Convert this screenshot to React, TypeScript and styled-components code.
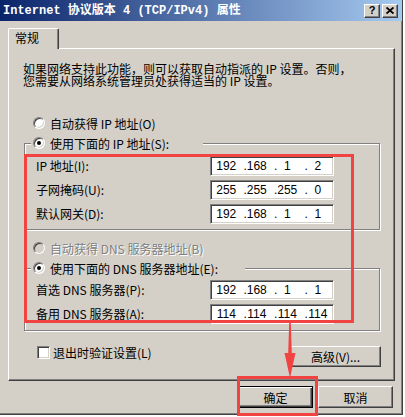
import React from 'react';
import styled, { createGlobalStyle } from 'styled-components';

const FACE = '#d4d0c8';
const RED = '#f24343';

const GlobalStyle = createGlobalStyle`
  html, body {
    margin: 0;
    padding: 0;
    background: #ffffff;
  }
  body {
    font-family: "Noto Sans CJK SC", "Noto Sans", sans-serif;
    font-size: 12px;
    color: #000;
  }
  * {
    box-sizing: border-box;
  }
`;

const Screen = styled.div`
  position: relative;
  width: 405px;
  height: 417px;
  overflow: hidden;
`;

const Window = styled.div`
  width: 403px;
  height: 415px;
  background: ${FACE};
  border-right: 1px solid #404040;
  border-bottom: 1px solid #404040;
  box-shadow: inset -1px -1px 0 #808080;
  display: flex;
  flex-direction: column;
`;

const TitleBar = styled.div`
  height: 21px;
  flex: none;
  display: flex;
  align-items: center;
  justify-content: space-between;
  padding: 0 4px 0 3px;
  background: linear-gradient(to right, #0a246a, #a6caf0);
`;

const Title = styled.span`
  font-family: "Liberation Mono", "Noto Sans CJK SC", monospace;
  font-weight: bold;
  font-size: 12px;
  line-height: 14px;
  color: #fff;
  white-space: nowrap;
`;

const CaptionButtons = styled.div`
  display: flex;
  gap: 2px;
`;

const CaptionButton = styled.div`
  width: 16px;
  height: 14px;
  background: ${FACE};
  border: 1px solid;
  border-color: #fff #404040 #404040 #fff;
  box-shadow: inset -1px -1px 0 #808080;
  display: flex;
  align-items: center;
  justify-content: center;
  font-family: "Liberation Sans", sans-serif;
  font-weight: bold;
  font-size: 11px;
  line-height: 1;
`;

const Body = styled.div`
  flex: 1;
  padding: 7px 0 0 8px;
  display: flex;
  flex-direction: column;
`;

const TabStrip = styled.div`
  display: flex;
  height: 20px;
  position: relative;
  z-index: 1;
`;

const Tab = styled.div`
  width: 51px;
  height: 21px;
  background: ${FACE};
  border-top: 1px solid #fff;
  border-left: 1px solid #fff;
  border-right: 1px solid #404040;
  box-shadow: inset -1px 0 0 #808080;
  border-top-left-radius: 2px;
  border-top-right-radius: 2px;
  padding-left: 6px;
  line-height: 18px;
`;

const Panel = styled.div`
  width: 387px;
  height: 333px;
  border: 1px solid;
  border-color: #fff #404040 #404040 #fff;
  box-shadow: inset -1px -1px 0 #808080;
  display: flex;
  flex-direction: column;
`;

const Description = styled.p`
  margin: 14px 0 0 14px;
  line-height: 12px;
  white-space: nowrap;
`;

const OptionRow = styled.div<{ $top: number; $disabled?: boolean }>`
  display: flex;
  align-items: center;
  gap: 5px;
  height: 16px;
  margin: ${(p) => p.$top}px 0 0 24px;
  white-space: nowrap;
  color: ${(p) => (p.$disabled ? '#808080' : '#000')};
  text-shadow: ${(p) => (p.$disabled ? '1px 1px 0 #fff' : 'none')};
`;

const Radio = styled.span<{ $checked?: boolean; $disabled?: boolean }>`
  position: relative;
  flex: none;
  width: 12px;
  height: 12px;
  border-radius: 50%;
  border: 1px solid;
  border-color: #808080 #fff #fff #808080;
  background: ${(p) => (p.$disabled ? FACE : '#fff')};
  box-shadow: inset 1px 1px 0 #404040, inset -1px -1px 0 ${FACE};
  &::after {
    content: '';
    display: ${(p) => (p.$checked ? 'block' : 'none')};
    position: absolute;
    left: 3px;
    top: 3px;
    width: 4px;
    height: 4px;
    border-radius: 50%;
    background: #000;
  }
`;

const GroupBox = styled.div<{ $top: number; $padTop: number; $padBottom: number }>`
  position: relative;
  margin: ${(p) => p.$top}px 14px 0 15px;
  padding: ${(p) => p.$padTop}px 0 ${(p) => p.$padBottom}px 11px;
  border: 1px solid #808080;
  box-shadow: inset 1px 1px 0 #fff, 1px 1px 0 #fff;
  display: grid;
  grid-template-columns: 174px 124px;
  row-gap: 4px;
  align-items: center;
`;

const Legend = styled.div<{ $width: number }>`
  position: absolute;
  top: -9px;
  left: 6px;
  width: ${(p) => p.$width}px;
  height: 16px;
  padding-left: 2px;
  background: ${FACE};
  display: flex;
  align-items: center;
  gap: 5px;
  white-space: nowrap;
`;

const FieldLabel = styled.span`
  line-height: 20px;
  white-space: nowrap;
`;

const IpBox = styled.div`
  width: 124px;
  height: 20px;
  background: #fff;
  border: 1px solid;
  border-color: #808080 #fff #fff #808080;
  box-shadow: inset 1px 1px 0 #404040, inset -1px -1px 0 ${FACE};
  display: grid;
  grid-template-columns: repeat(4, 1fr);
  align-items: center;
  font-family: "Liberation Sans", sans-serif;
  font-size: 12px;
  line-height: 18px;
`;

const Octet = styled.span<{ $dot: boolean }>`
  position: relative;
  text-align: center;
  &::before {
    content: '.';
    display: ${(p) => (p.$dot ? 'block' : 'none')};
    position: absolute;
    left: 2px;
    top: 0;
  }
`;

const PanelFooter = styled.div`
  display: flex;
  justify-content: space-between;
  align-items: flex-start;
  margin: 14px 13px 0 28px;
`;

const CheckRow = styled.div`
  display: flex;
  align-items: center;
  gap: 3px;
  height: 14px;
  white-space: nowrap;
`;

const CheckBox = styled.span`
  flex: none;
  width: 13px;
  height: 13px;
  background: #fff;
  border: 1px solid;
  border-color: #808080 #fff #fff #808080;
  box-shadow: inset 1px 1px 0 #404040, inset -1px -1px 0 ${FACE};
`;

const Button = styled.div<{ $width: number; $height: number; $default?: boolean }>`
  width: ${(p) => p.$width}px;
  height: ${(p) => p.$height}px;
  background: ${FACE};
  border: 1px solid;
  border-color: ${(p) => (p.$default ? '#000' : '#fff #404040 #404040 #fff')};
  box-shadow: ${(p) => (p.$default
    ? 'inset 1px 1px 0 #fff, inset -1px -1px 0 #404040, inset -2px -2px 0 #808080'
    : 'inset -1px -1px 0 #808080')};
  display: flex;
  align-items: center;
  justify-content: center;
  white-space: nowrap;
`;

const AdvancedButton = styled(Button)`
  margin-top: 1px;
`;

const DialogButtons = styled.div`
  display: flex;
  justify-content: flex-end;
  gap: 5px;
  width: 387px;
  padding-right: 2px;
  margin-top: 5px;
`;

const Highlight = styled.div<{ $x: number; $y: number; $w: number; $h: number }>`
  position: absolute;
  left: ${(p) => p.$x}px;
  top: ${(p) => p.$y}px;
  width: ${(p) => p.$w}px;
  height: ${(p) => p.$h}px;
  border: 3px solid ${RED};
  pointer-events: none;
`;

const ArrowLayer = styled.svg`
  position: absolute;
  left: 0;
  top: 0;
  pointer-events: none;
`;

type Field = { label: string, value: string };

const ipFields: Field[] = [
  { label: 'IP 地址(I):', value: '192.168.1.2' },
  { label: '子网掩码(U):', value: '255.255.255.0' },
  { label: '默认网关(D):', value: '192.168.1.1' },
];

const dnsFields: Field[] = [
  { label: '首选 DNS 服务器(P):', value: '192.168.1.1' },
  { label: '备用 DNS 服务器(A):', value: '114.114.114.114' },
];

function IpInput({ value }: { value: string }): JSX.Element {
  return (
    <IpBox>
      {value.split('.').map((part, i) => (
        <Octet key={i} $dot={i > 0}>{part}</Octet>
      ))}
    </IpBox>
  );
}

function FieldRows({ fields }: { fields: Field[] }): JSX.Element {
  return (
    <>
      {fields.map((f) => (
        <React.Fragment key={f.label}>
          <FieldLabel>{f.label}</FieldLabel>
          <IpInput value={f.value} />
        </React.Fragment>
      ))}
    </>
  );
}

function App(): JSX.Element {
  return (
    <>
      <GlobalStyle />
      <Screen>
        <Window>
          <TitleBar>
            <Title>Internet 协议版本 4 (TCP/IPv4) 属性</Title>
            <CaptionButtons>
              <CaptionButton>?</CaptionButton>
              <CaptionButton>
                <svg width="8" height="7" viewBox="0 0 8 7">
                  <path d="M0.5 0.5 L7.5 6.5 M7.5 0.5 L0.5 6.5" stroke="#000" strokeWidth="1.8" />
                </svg>
              </CaptionButton>
            </CaptionButtons>
          </TitleBar>
          <Body>
            <TabStrip>
              <Tab>常规</Tab>
            </TabStrip>
            <Panel>
              <Description>
                如果网络支持此功能，则可以获取自动指派的 IP 设置。否则，
                <br />
                您需要从网络系统管理员处获得适当的 IP 设置。
              </Description>
              <OptionRow $top={28}>
                <Radio />
                自动获得 IP 地址(O)
              </OptionRow>
              <GroupBox $top={12} $padTop={12} $padBottom={5}>
                <Legend $width={172}>
                  <Radio $checked />
                  使用下面的 IP 地址(S):
                </Legend>
                <FieldRows fields={ipFields} />
              </GroupBox>
              <OptionRow $top={10} $disabled>
                <Radio $disabled />
                自动获得 DNS 服务器地址(B)
              </OptionRow>
              <GroupBox $top={12} $padTop={11} $padBottom={6}>
                <Legend $width={214}>
                  <Radio $checked />
                  使用下面的 DNS 服务器地址(E):
                </Legend>
                <FieldRows fields={dnsFields} />
              </GroupBox>
              <PanelFooter>
                <CheckRow>
                  <CheckBox />
                  退出时验证设置(L)
                </CheckRow>
                <AdvancedButton $width={91} $height={21}>高级(V)...</AdvancedButton>
              </PanelFooter>
            </Panel>
            <DialogButtons>
              <Button $width={75} $height={22} $default>确定</Button>
              <Button $width={75} $height={22}>取消</Button>
            </DialogButtons>
          </Body>
        </Window>
        <Highlight $x={24} $y={154} $w={330} $h={169} />
        <Highlight $x={237} $y={376} $w={81} $h={40} />
        <ArrowLayer width="405" height="417" viewBox="0 0 405 417">
          <polygon
            points="289.2,322 290.8,322 291.8,353 295.5,353 290,378 284.5,353 288.2,353"
            fill={RED}
          />
        </ArrowLayer>
      </Screen>
    </>
  );
}

export default App;
